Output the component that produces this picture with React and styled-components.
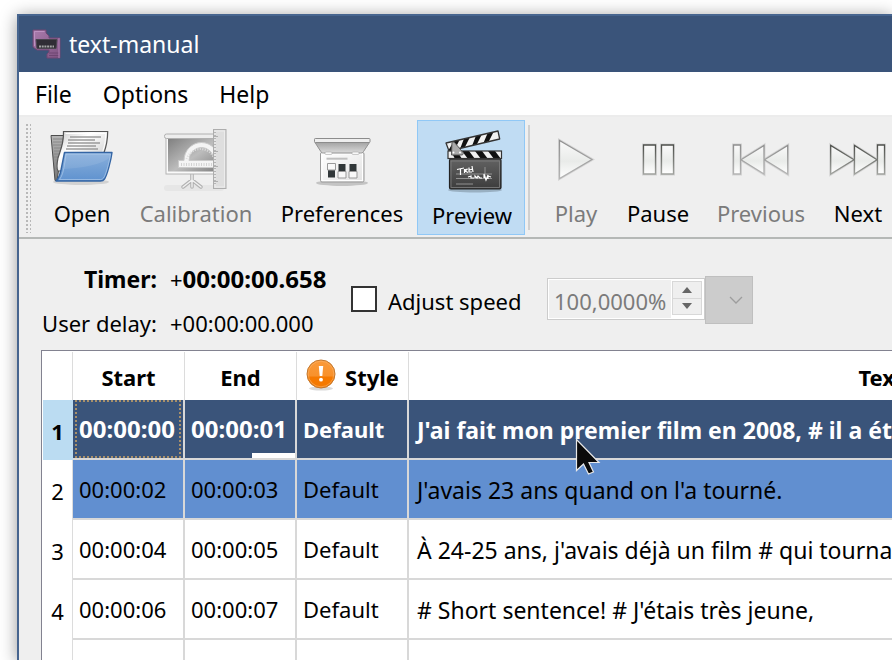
import React from "react";
import styled, { createGlobalStyle, css } from "styled-components";

const GlobalStyle = createGlobalStyle`
  *, *::before, *::after { box-sizing: border-box; }
  html, body { margin: 0; background: #fff; }
  body {
    font-family: "Noto Sans", "Open Sans", sans-serif;
    font-size: 22px;
    line-height: 30px;
    color: #000;
    overflow: hidden;
  }
  button, input, select { font: inherit; color: inherit; margin: 0; }
`;

const Desktop = styled.div`
  height: 100vh;
  padding: 14px 0 0 17px;
  overflow: hidden;
`;

const Window = styled.main`
  display: flex;
  flex-direction: column;
  height: 100%;
  border: solid #47658f;
  border-width: 2px 0 0 2px;
  background: #efefef;
  box-shadow: 0 2px 16px rgba(0, 0, 0, 0.4);
`;

const TitleBar = styled.header`
  display: flex;
  align-items: center;
  gap: 7px;
  flex: none;
  height: 56px;
  padding-left: 13px;
  background: #3a547a;
  color: #fff;
`;

const Title = styled.h1`
  margin: 0;
  padding-bottom: 1px;
  font-size: 23px;
  font-weight: 400;
`;

const MenuBar = styled.nav`
  display: flex;
  flex: none;
  gap: 31px;
  height: 45px;
  padding: 0 16px;
  background: #fff;
  border-bottom: 2px solid #ececec;
  font-size: 23px;
`;

const MenuItem = styled.button`
  padding: 0;
  border: 0;
  background: none;
  text-align: left;
`;

const ToolBar = styled.div`
  display: flex;
  flex: none;
  align-items: flex-start;
  height: 122px;
  padding: 3px 0 0 6px;
  border-bottom: 2px solid #b5b8b6;
`;

const Grip = styled.div`
  flex: none;
  width: 6px;
  height: 110px;
  margin: 3px 8px 0 0;
  background: radial-gradient(circle, #b8b8b8 1px, transparent 1px) 0 0 / 4px 4px;
`;

const ToolButton = styled.button`
  display: flex;
  flex: none;
  flex-direction: column;
  align-items: center;
  gap: 6px;
  width: ${(p) => p.$width}px;
  height: 115px;
  padding: 7px 0 0;
  border: 1px solid transparent;
  background: none;
  white-space: nowrap;
  &:disabled { color: #7b7b7b; }
  ${(p) =>
    p.$pressed &&
    css`
      gap: 7px;
      padding: 8px 0 0 2px;
      border-color: #90c8f6;
      background: #c0dcf3;
    `}
`;

const Separator = styled.div`
  flex: none;
  width: 2px;
  height: 105px;
  margin: 5px 10px 0 3px;
  background: #d0d0d0;
`;

const Controls = styled.section`
  display: flex;
  flex: none;
  align-items: center;
  padding: 18px 0 0 22px;
`;

const Timings = styled.dl`
  display: grid;
  grid-template-columns: 116px 158px;
  column-gap: 13px;
  row-gap: 0;
  margin: 0 23px 0 0;
  line-height: 44px;
`;

const TimingLabel = styled.dt`
  height: 44px;
  text-align: right;
  white-space: nowrap;
  ${(p) => p.$bold && css`font-size: 23px; font-weight: 700;`}
`;

const TimingValue = styled.dd`
  height: 44px;
  margin: 0;
  white-space: nowrap;
  ${(p) => p.$bold && css`font-size: 24px; font-weight: 700;`}
`;

const Sign = styled.span`
  font-size: 22px;
  font-weight: 400;
`;

const CheckLabel = styled.label`
  display: flex;
  align-items: center;
  gap: 11px;
  width: 196px;
  white-space: nowrap;
`;

const CheckBox = styled.input`
  appearance: none;
  width: 26px;
  height: 26px;
  margin-top: -4px;
  border: 2px solid #333;
  background: #fff;
`;

const SpinBox = styled.div`
  display: flex;
  width: 158px;
  height: 42px;
  margin-top: -4px;
  padding: 1px;
  border: 1px solid #ccc;
  background: #fff;
`;

const SpinInput = styled.input`
  flex: 1;
  min-width: 0;
  padding: 4px 0 0 5px;
  border: 0;
  background: #efefef;
  color: #7b7b7b;
`;

const SpinButtons = styled.div`
  display: flex;
  flex: none;
  flex-direction: column;
  width: 30px;
  height: 34px;
  margin: 1px 1px 0;
  border: 1px solid #d8d8d8;
`;

const SpinButton = styled.button`
  display: grid;
  flex: 1;
  place-items: center;
  padding: 0;
  border: 0;
  background: #efefef;
  & + & { border-top: 1px solid #d8d8d8; }
`;

const PickerFrame = styled.div`
  display: grid;
  width: 48px;
  height: 48px;
  margin-top: -2px;
  align-items: center;
  justify-items: end;
  & > * { grid-area: 1 / 1; }
  & > svg { margin-right: 10px; pointer-events: none; }
`;

const Picker = styled.select`
  appearance: none;
  width: 100%;
  height: 100%;
  border: 1px solid #bfbfbf;
  border-radius: 0;
  background: #ccc;
  opacity: 1;
`;

const TableFrame = styled.section`
  flex: 1;
  min-height: 0;
  margin: 5px 0 0 22px;
  padding: 1px 0 0 1px;
  overflow: hidden;
  border: solid #828290;
  border-width: 1px 0 0 1px;
  background: #fff;
`;

const Table = styled.table`
  width: 1312px;
  table-layout: fixed;
  border-spacing: 0;
`;

const Col = styled.col`
  width: ${(p) => p.$width}px;
`;

const HeadCell = styled.th`
  height: 48px;
  padding: 2px 0 0;
  border-right: 1px solid #dcdcdc;
  font-weight: 700;
`;

const HeadContent = styled.span`
  display: flex;
  align-items: center;
  justify-content: center;
  gap: 9px;
  & > svg { margin-bottom: 4px; }
`;

const tones = {
  current: css`background: #3a547a; color: #fff; font-weight: 700;`,
  next: css`background: #618fd0;`,
  plain: css`background: #fff;`,
};

const IndexCell = styled.th`
  height: 60px;
  padding: 2px 0 0;
  border-right: 1px solid ${(p) => (p.$current ? "#bbdcf2" : "#dcdcdc")};
  background: ${(p) => (p.$current ? "#bbdcf2" : "#fff")};
  font-weight: ${(p) => (p.$current ? 700 : 400)};
`;

const Cell = styled.td`
  position: relative;
  padding: 0 0 0 6px;
  border: solid #d8d8d8;
  border-width: 0 2px 2px 0;
  white-space: nowrap;
  ${(p) => tones[p.$tone]}
`;

const TimeCell = styled(Cell)`
  font-size: ${(p) => (p.$tone === "current" ? 24 : 22)}px;
`;

const TextCell = styled(Cell)`
  padding: 2px 0 0 8px;
  font-size: 23px;
`;

const FocusRing = styled.span`
  position: absolute;
  inset: 0 2px 0 2px;
  border: 2px dotted #a8906a;
`;

const Progress = styled.span`
  position: absolute;
  right: 0;
  bottom: 0;
  width: 43px;
  height: 5px;
  background: #fff;
`;

const Pointer = styled.svg`
  position: absolute;
  left: 575px;
  top: 438px;
`;

const Icon = ({ children, size = 64 }) => (
  <svg width={size} height={size} viewBox={`0 0 ${size} ${size}`} aria-hidden="true">
    {children}
  </svg>
);

const AppIcon = () => (
  <Icon size={30}>
    <defs>
      <linearGradient id="purple" x1="0" y1="0" x2="1" y2="1">
        <stop offset="0" stopColor="#ab7cad" />
        <stop offset="1" stopColor="#7d5280" />
      </linearGradient>
    </defs>
    <path d="M1 1h13v3l3 3v2h11v20H15v-4l2-2v-2H5l-4-3z" fill="url(#purple)" stroke="#6e4672" />
    <path d="M2.500 17V2.500h10" fill="none" stroke="#bd91c0" />
    <path d="M17 24h10M17 26.500h10" stroke="#6e4672" />
    <path d="M27 9v20" stroke="#b383b6" />
    <path d="M4 10.500h21l-1 9H5z" fill="#302d35" stroke="#4a454f" />
    <path d="M7 17.500h15" stroke="#a5a5a5" strokeWidth="2" strokeDasharray="2 .7" />
  </Icon>
);

const OpenIcon = () => (
  <Icon>
    <defs>
      <linearGradient id="paper" x1="0" y1="0" x2="1" y2="1">
        <stop offset="0" stopColor="#c8c8c8" /><stop offset=".35" stopColor="#fff" /><stop offset="1" stopColor="#c0c0c0" />
      </linearGradient>
      <linearGradient id="folder" x1="0" y1="0" x2="0" y2="1">
        <stop offset="0" stopColor="#8ab0dc" /><stop offset="1" stopColor="#5f92cf" />
      </linearGradient>
      <linearGradient id="back" x1="0" y1="0" x2="0" y2="1">
        <stop offset="0" stopColor="#b5b5b5" /><stop offset="1" stopColor="#777" />
      </linearGradient>
    </defs>
    <ellipse cx="31" cy="54" rx="28" ry="3" fill="#000" opacity=".12" />
    <path d="M1 7.500h13l-7 45H5z" fill="url(#back)" stroke="#4c4c4c" />
    <path d="M3 11h10M3 14h9M3 17h9M4 20h7M4 23h6M4 26h6M4 29h5M5 32h4" stroke="#888" />
    <path d="M13.500 3.500h44.200c0 8-1 14-4 22L44 43H8c-2-3-1-8 0-13 2-7 6-14 5.500-26.500z" fill="url(#paper)" stroke="#555" strokeWidth="1.200" />
    <path d="M15.500 5.500h40.200c0 7-1 12-3 18" fill="none" stroke="#fff" />
    <path d="M20 9h31M18 12h27M18 15h32M17 18h29M16 21h32" stroke="#9a9a9a" strokeWidth="1.300" />
    <path d="M14.500 24.500h47.500c-1 8-5 23-7.500 26.500-1 1.500-2 2-4 2H6c3-3 4-6 5-11z" fill="url(#folder)" stroke="#3465a4" strokeWidth="1.400" strokeLinejoin="round" />
    <path d="M16 26h44.500c-1 7-4.500 21-7 24-1 1.200-2 1.500-3 1.500H9.500c3-4 3.500-8 4.500-12z" fill="none" stroke="#b9d2ee" opacity=".6" />
    <path d="M14 41c16-1 32-3 44-10l2.500-5H16z" fill="#fff" opacity=".09" />
  </Icon>
);

const CalibrationIcon = () => (
  <Icon>
    <defs>
      <linearGradient id="screen" x1="0" y1="0" x2="1" y2="1">
        <stop offset="0" stopColor="#808080" /><stop offset=".55" stopColor="#bdbdbd" /><stop offset="1" stopColor="#868686" />
      </linearGradient>
    </defs>
    <rect y="57" width="60" height="6" rx="3" fill="#e6e6e6" />
    <path d="M28 46v9M28 52l-9 7M28 52l9 7M28 52v7" stroke="#b2b2b2" strokeWidth="3.600" strokeLinecap="round" />
    <path d="M28 46v9M28 52l-9 7M28 52l9 7M28 52v7" stroke="#f0f0f0" strokeWidth="1.400" strokeLinecap="round" />
    <rect x="2" y="9" width="49" height="37" fill="#fafafa" stroke="#b4b4b4" />
    <rect x="4" y="11" width="46" height="32.500" fill="url(#screen)" />
    <rect x=".5" y="6" width="51" height="4.500" rx="2" fill="#ededed" stroke="#b0b0b0" />
    <path d="M14.500 32.500H20a17.500 18 0 0 1 35 0v7H14.500z M25 32.500h25a12.500 13 0 0 0-25 0z" fill="#f4f4f4" fillRule="evenodd" stroke="#cacaca" />
    <path d="M17 36.500h32" stroke="#d2d2d2" strokeWidth="3" strokeDasharray="1 1.500" />
    <path d="M22.500 31a15 15.500 0 0 1 28 0" fill="none" stroke="#dcdcdc" strokeWidth="2" strokeDasharray="1 1.500" />
    <rect x="49.500" y="1.500" width="12.500" height="59" fill="#dedede" stroke="#adadad" />
    <rect x="51" y="3" width="9.500" height="56" fill="none" stroke="#ececec" />
    <path d="M51 4v54" stroke="#b5b5b5" strokeWidth="2" strokeDasharray="1 2" />
    <path d="M52 8v50" stroke="#b0b0b0" strokeWidth="4" strokeDasharray="1 14" />
  </Icon>
);

const PreferencesIcon = () => (
  <Icon>
    <defs>
      <linearGradient id="lid" x1="0" y1="0" x2="0" y2="1">
        <stop offset="0" stopColor="#a4a4a4" /><stop offset="1" stopColor="#dadada" />
      </linearGradient>
      <linearGradient id="body" x1="0" y1="0" x2="1" y2="1">
        <stop offset="0" stopColor="#fff" /><stop offset="1" stopColor="#e2e2e2" />
      </linearGradient>
    </defs>
    <ellipse cx="32" cy="55" rx="26" ry="3" fill="#000" opacity=".18" />
    <rect x="10.500" y="24.500" width="43.500" height="29.500" rx="1.500" fill="url(#body)" stroke="#999" />
    <rect x="12" y="26" width="40.500" height="26.500" fill="none" stroke="#fff" />
    <path d="M5 14.500h54.500l-6 9c-1 1.300-1.500 1.500-3 1.500h-37c-1.500 0-2-.2-2.700-1.500z" fill="url(#lid)" stroke="#929292" />
    <rect x="4.500" y="10.500" width="55.500" height="4" rx=".8" fill="#eee" stroke="#8c8c8c" />
    <rect x="15" y="24" width="7" height="2.500" rx="1" fill="#f8f8f8" stroke="#aaa" strokeWidth=".6" />
    <rect x="42" y="24" width="7" height="2.500" rx="1" fill="#f8f8f8" stroke="#aaa" strokeWidth=".6" />
    <path d="M16.500 30.700h21" stroke="#c0c0c0" strokeWidth="2" />
    <path d="M18 42h7v7.500h-7zM28.500 36h7v7.500h-7zM39.500 36h7v7.500h-7z" fill="#303638" />
    <path d="M17.500 35.500h8v6.500h-8zM28 43.500h8v6.500h-8zM39 43.500h8v6.500h-8z" fill="#f8f8f8" stroke="#999" />
  </Icon>
);

const PreviewIcon = () => (
  <Icon>
    <defs>
      <linearGradient id="board" x1="0" y1="0" x2="0" y2="1">
        <stop offset="0" stopColor="#626262" /><stop offset="1" stopColor="#3c3c3c" />
      </linearGradient>
      <clipPath id="armTop"><path d="M6 14l52-12 1.700 8L9 22z" /></clipPath>
      <clipPath id="armLow"><rect x="8" y="22" width="53.500" height="7.500" /></clipPath>
    </defs>
    <ellipse cx="35" cy="61" rx="27" ry="2.500" fill="#000" opacity=".2" />
    <rect x="9.500" y="30" width="51.500" height="30" rx="1.500" fill="url(#board)" stroke="#222" strokeWidth="1.200" />
    <rect x="11" y="32" width="48.500" height="26.500" fill="none" stroke="#808080" strokeWidth=".8" />
    <g clipPath="url(#armTop)">
      <path d="M4 0h58v24H4z" fill="#f1f1f1" />
      <path d="M8 22l6-10 6-2-6 12zM20 20l5-13 6-1-6 12zM32 17l5-13 6-1-6 12zM43 15l6-14 6-1-6 12z" fill="#111" />
    </g>
    <path d="M6 14l52-12 1.700 8L9 22z" fill="none" stroke="#333" strokeWidth="1.300" strokeLinejoin="round" />
    <g clipPath="url(#armLow)">
      <path d="M7 21h56v10H7z" fill="#f1f1f1" />
      <path d="M11 22h6l5 8h-7zM22 22h7l6 8h-7zM35 22h7l6 8h-7zM48 22h7l6 8h-7z" fill="#111" />
    </g>
    <rect x="8" y="22" width="53.500" height="7.500" fill="none" stroke="#333" strokeWidth="1.200" />
    <path d="M12 13.500c1-.8 2-.5 3 .5l8 9.500c.8 1.500 0 2.500-2 2.500h-9.500z" fill="#aaa" stroke="#555" />
    <circle cx="13.500" cy="23.500" r="1" fill="#fff" /><circle cx="20" cy="23.500" r="1" fill="#fff" />
    <path d="M16 45h36M16 49.500h36M16 55h17M45 38v11" stroke="#929292" />
    <path d="M17 40.500l7-1.500M20.500 40v6M24.500 40v4M24.500 41l3-1-2.500 2 3 1.500M29 38.500v4.500h3M29 41l4-1M32 37l1 6M28 48l3-1v2h3M35 49v-2l2 2 1-2 2 2h2M44 49v-4l2 6 2-5v4M48 47l3 1" fill="none" stroke="#fff" strokeWidth="1.200" />
  </Icon>
);

const MediaGradient = () => (
  <defs>
    <linearGradient id="glass" x1="0" y1="0" x2="0" y2="1">
      <stop offset="0" stopColor="#fafafa" /><stop offset=".55" stopColor="#e9ebe9" /><stop offset="1" stopColor="#fff" />
    </linearGradient>
    <linearGradient id="edge" x1="0" y1="0" x2="0" y2="1">
      <stop offset="0" stopColor="#4d4f4b" /><stop offset="1" stopColor="#a0a29e" />
    </linearGradient>
    <linearGradient id="edgeDim" x1="0" y1="0" x2="0" y2="1">
      <stop offset="0" stopColor="#8f8f8f" /><stop offset="1" stopColor="#b4b4b4" />
    </linearGradient>
  </defs>
);

const MediaIcon = ({ d, dim }) => (
  <Icon>
    <MediaGradient />
    <path d={d} fill="none" stroke="#d6d6d6" strokeWidth="3" />
    <path d={d} fill="url(#glass)" stroke={dim ? "url(#edgeDim)" : "url(#edge)"} strokeWidth="1.300" />
  </Icon>
);

const WarningIcon = () => (
  <svg width="30" height="32" viewBox="0 0 30 32" aria-hidden="true">
    <defs>
      <linearGradient id="orange" x1="0" y1="0" x2="0" y2="1">
        <stop offset="0" stopColor="#fa9a3a" /><stop offset=".58" stopColor="#f8912b" />
        <stop offset=".6" stopColor="#f57900" /><stop offset="1" stopColor="#f57900" />
      </linearGradient>
    </defs>
    <ellipse cx="15" cy="29.500" rx="12" ry="2" fill="#000" opacity=".15" />
    <circle cx="15" cy="15" r="14" fill="url(#orange)" stroke="#c17830" />
    <circle cx="15" cy="15" r="12.800" fill="none" stroke="#fcb267" opacity=".6" />
    <path d="M12.800 7h4.400l-.9 10h-2.600z" fill="#fff" />
    <circle cx="15" cy="20.700" r="1.900" fill="#fff" />
  </svg>
);

const tools = [
  { name: "Open", width: 86, icon: <OpenIcon /> },
  { name: "Calibration", width: 142, icon: <CalibrationIcon />, disabled: true },
  { name: "Preferences", width: 150, icon: <PreferencesIcon /> },
  { name: "Preview", width: 108, icon: <PreviewIcon />, pressed: true },
];

const playback = [
  { name: "Play", width: 72, disabled: true, icon: <MediaIcon dim d="M15.500 12.500L48 31.500 15.500 50.500z" /> },
  { name: "Pause", width: 92, icon: <MediaIcon d="M17.500 17h12v29h-12zM35.500 17h12v29h-12z" /> },
  {
    name: "Previous", width: 114, disabled: true,
    icon: <MediaIcon dim d="M4.500 17h7v29h-7zM35 17.500v28.500L12 31.700zM58.700 17.500v28.500L35.500 31.700z" />,
  },
  { name: "Next", width: 80, icon: <MediaIcon d="M4.700 17.500v28.500L28 31.700zM28.500 17.500v28.500L51 31.700zM51.500 17h7v29h-7z" /> },
];

const rows = [
  { start: "00:00:00", end: "00:00:01", style: "Default", text: "J'ai fait mon premier film en 2008, # il a été", tone: "current" },
  { start: "00:00:02", end: "00:00:03", style: "Default", text: "J'avais 23 ans quand on l'a tourné.", tone: "next" },
  { start: "00:00:04", end: "00:00:05", style: "Default", text: "À 24-25 ans, j'avais déjà un film # qui tournait", tone: "plain" },
  { start: "00:00:06", end: "00:00:07", style: "Default", text: "# Short sentence! # J'étais très jeune,", tone: "plain" },
];

const Tools = ({ items }) =>
  items.map((t) => (
    <ToolButton key={t.name} type="button" $width={t.width} $pressed={t.pressed} disabled={t.disabled} aria-pressed={t.pressed}>
      {t.icon}
      {t.name}
    </ToolButton>
  ));

export default function App() {
  return (
    <>
      <GlobalStyle />
      <Desktop>
        <Window>
          <TitleBar>
            <AppIcon />
            <Title>text-manual</Title>
          </TitleBar>
          <MenuBar>
            {["File", "Options", "Help"].map((m) => (
              <MenuItem key={m} type="button">{m}</MenuItem>
            ))}
          </MenuBar>
          <ToolBar role="toolbar">
            <Grip />
            <Tools items={tools} />
            <Separator />
            <Tools items={playback} />
          </ToolBar>
          <Controls>
            <Timings>
              <TimingLabel $bold>Timer:</TimingLabel>
              <TimingValue $bold><Sign>+</Sign>00:00:00.658</TimingValue>
              <TimingLabel>User delay:</TimingLabel>
              <TimingValue>+00:00:00.000</TimingValue>
            </Timings>
            <CheckLabel>
              <CheckBox type="checkbox" />
              Adjust speed
            </CheckLabel>
            <SpinBox>
              <SpinInput aria-label="Speed" type="text" defaultValue="100,0000%" disabled />
              <SpinButtons>
                <SpinButton type="button" aria-label="Increase" disabled>
                  <svg width="10" height="6"><path d="M0 6l5-6 5 6z" fill="#666" /></svg>
                </SpinButton>
                <SpinButton type="button" aria-label="Decrease" disabled>
                  <svg width="10" height="6"><path d="M0 0l5 6 5-6z" fill="#666" /></svg>
                </SpinButton>
              </SpinButtons>
            </SpinBox>
            <PickerFrame>
              <Picker aria-label="Speed preset" disabled />
              <svg width="14" height="8"><path d="M1 1l6 6 6-6" fill="none" stroke="#9d9d9d" strokeWidth="1.300" /></svg>
            </PickerFrame>
          </Controls>
          <TableFrame>
            <Table>
              <colgroup>
                <Col $width={30} />
                <Col $width={112} />
                <Col $width={112} />
                <Col $width={112} />
                <Col $width={946} />
              </colgroup>
              <thead>
                <tr>
                  <HeadCell />
                  <HeadCell scope="col">Start</HeadCell>
                  <HeadCell scope="col">End</HeadCell>
                  <HeadCell scope="col"><HeadContent><WarningIcon />Style</HeadContent></HeadCell>
                  <HeadCell scope="col">Text</HeadCell>
                </tr>
              </thead>
              <tbody>
                {rows.map((r, i) => (
                  <tr key={r.start}>
                    <IndexCell scope="row" $current={i === 0}>{i + 1}</IndexCell>
                    <TimeCell $tone={r.tone}>{r.start}{i === 0 && <FocusRing />}</TimeCell>
                    <TimeCell $tone={r.tone}>{r.end}{i === 0 && <Progress />}</TimeCell>
                    <Cell $tone={r.tone}>{r.style}</Cell>
                    <TextCell $tone={r.tone}>{r.text}</TextCell>
                  </tr>
                ))}
                <tr>
                  <IndexCell />
                  <Cell $tone="plain" />
                  <Cell $tone="plain" />
                  <Cell $tone="plain" />
                  <Cell $tone="plain" />
                </tr>
              </tbody>
            </Table>
          </TableFrame>
        </Window>
      </Desktop>
      <Pointer width="26" height="38" viewBox="0 0 26 38" aria-hidden="true">
        <path d="M1.500 1.500v31l7-6.500 5 10 5-2-4.500-9.500h10z" fill="#0a0a0a" stroke="#e8e8e8" strokeWidth="1.200" />
      </Pointer>
    </>
  );
}
